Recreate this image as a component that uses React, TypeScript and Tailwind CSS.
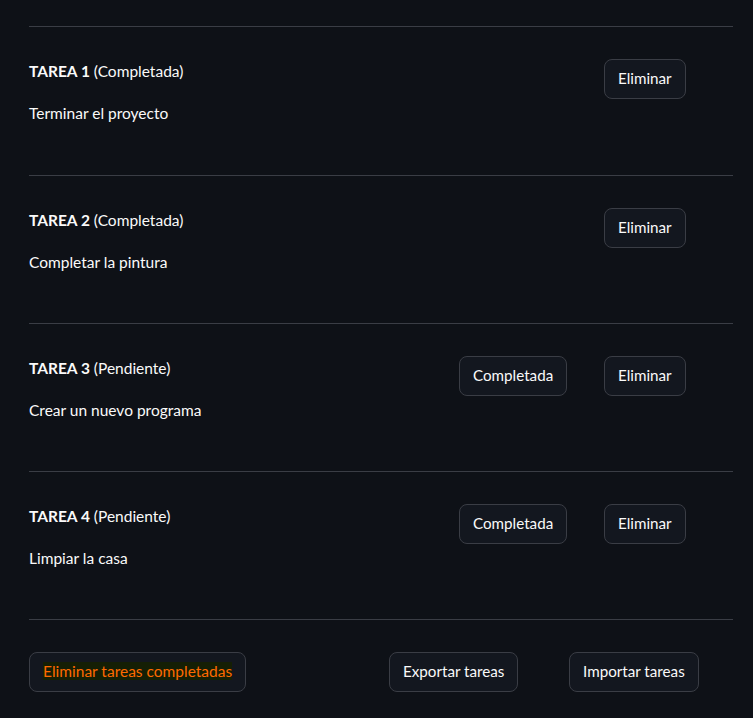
import React from "react";

const font = { fontFamily: '"Source Sans Pro", Lato, "Noto Sans", sans-serif' };

type Task = { n: number; status: string; desc: string; done: boolean };

const tasks: Task[] = [
  { n: 1, status: "Completada", desc: "Terminar el proyecto", done: true },
  { n: 2, status: "Completada", desc: "Completar la pintura", done: true },
  { n: 3, status: "Pendiente", desc: "Crear un nuevo programa", done: false },
  { n: 4, status: "Pendiente", desc: "Limpiar la casa", done: false },
];

function Btn({ children }: { children: React.ReactNode }) {
  return (
    <button className="h-[40px] px-[13px] rounded-[8px] border border-[#3a3d45] bg-[#13171f] text-[#fafafa] text-[15.2px] leading-none whitespace-nowrap">
      {children}
    </button>
  );
}

export default function App() {
  return (
    <div className="min-h-[718px] w-[753px] bg-[#0e1117] pt-[26px] pl-[29px] pr-[20px] text-[#fafafa]" style={font}>
      {tasks.map((t, i) => (
        <div
          key={t.n}
          className={`${i === 0 ? "h-[149px]" : "h-[148px]"} border-t border-[#3a3d45] pt-[32px] grid grid-cols-[430px_145px_1fr] items-start`}
        >
          <div className="text-[15.5px] leading-[24px]">
            <div>
              <span className="font-bold">TAREA {t.n}</span> ({t.status})
            </div>
            <div className="mt-[18px]">{t.desc}</div>
          </div>
          <div>{!t.done && <Btn>Completada</Btn>}</div>
          <div>
            <Btn>Eliminar</Btn>
          </div>
        </div>
      ))}
      <div className="border-t border-[#3a3d45] pt-[32px] grid grid-cols-[360px_180px_1fr] items-start">
        <div>
          <Btn>
            <span className="bg-[#151f05] text-[#ff6a00] text-[15.5px]">Eliminar tareas completadas</span>
          </Btn>
        </div>
        <div>
          <Btn>Exportar tareas</Btn>
        </div>
        <div>
          <Btn>Importar tareas</Btn>
        </div>
      </div>
    </div>
  );
}
